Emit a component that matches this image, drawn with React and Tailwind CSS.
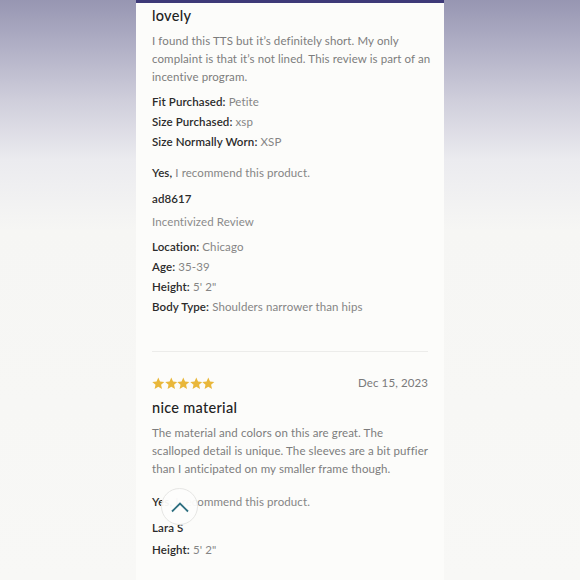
import React from 'react';

const Star = () => (
  <svg width="12.6" height="13" viewBox="0 0 24 23" className="shrink-0">
    <path d="M12 0.3l3.3 7.4 8.2.8-6.2 5.5 1.8 8.1L12 17.9l-7.1 4.2 1.8-8.1L.5 8.5l8.2-.8z" fill="#e9b73a" />
  </svg>
);

const Field = ({ label, value }) => (
  <div className="leading-[20px]">
    <span className="text-[#2b2b2b] font-semibold">{label}:</span>{' '}
    <span className="text-[#858585]">{value}</span>
  </div>
);

const App = () => {
  return (
    <div
      className="w-[580px] h-[580px] overflow-hidden flex justify-center bg-[linear-gradient(180deg,#9796b2_0px,#adacc3_40px,#cfcedb_100px,#ebebef_160px,#f6f6f4_230px,#f8f8f6_580px)]"
      style={{ fontFamily: 'Lato, "Noto Sans", sans-serif' }}
    >
      <div className="relative w-[308px] h-full bg-[#fcfcfa] flex flex-col text-[11.5px] tracking-[0.1px]">
        <div className="h-[3px] bg-[#3e3a78]" />
        <div className="pl-4 pr-3 flex flex-col">
          <h2 className="mt-[3px] text-[14.5px] leading-[20px] text-[#222] font-medium tracking-[0.3px]">lovely</h2>
          <p className="mt-[6px] leading-[18px] text-[#7d7d7d]">
            I found this TTS but it’s definitely short. My only complaint is that it’s not lined. This review is part of an incentive program.
          </p>
          <div className="mt-[6px]">
            <Field label="Fit Purchased" value="Petite" />
            <Field label="Size Purchased" value="xsp" />
            <Field label="Size Normally Worn" value="XSP" />
          </div>
          <div className="mt-[11px] leading-[20px]">
            <span className="text-[#2b2b2b] font-semibold">Yes,</span>{' '}
            <span className="text-[#858585]">I recommend this product.</span>
          </div>
          <div className="mt-[6px] leading-[20px] text-[#2b2b2b] font-semibold">ad8617</div>
          <div className="mt-[3px] leading-[20px] text-[#8a8a8a]">Incentivized Review</div>
          <div className="mt-[5px]">
            <Field label="Location" value="Chicago" />
            <Field label="Age" value="35-39" />
            <Field label="Height" value={'5\' 2"'} />
            <Field label="Body Type" value="Shoulders narrower than hips" />
          </div>
          <div className="mt-[34px] mr-1 h-px bg-[#ececea]" />

          <div className="mt-[21px] mr-1 h-[20px] flex items-center justify-between">
            <div className="flex">
              <Star /><Star /><Star /><Star /><Star />
            </div>
            <span className="text-[#7a7a7a]">Dec 15, 2023</span>
          </div>
          <h2 className="mt-[5px] text-[14.5px] leading-[20px] text-[#222] font-medium tracking-[0.3px]">nice material</h2>
          <p className="mt-[6px] leading-[18px] text-[#7d7d7d]">
            The material and colors on this are great. The scalloped detail is unique. The sleeves are a bit puffier than I anticipated on my smaller frame though.
          </p>
          <div className="mt-[14px] leading-[20px]">
            <span className="text-[#2b2b2b] font-semibold">Yes,</span>{' '}
            <span className="text-[#858585]">I recommend this product.</span>
          </div>
          <div className="mt-[6px] leading-[20px] text-[#2b2b2b] font-semibold">Lara S</div>
          <div className="mt-[2px]">
            <Field label="Height" value={'5\' 2"'} />
          </div>
        </div>

        <button className="absolute left-[25px] top-[488px] w-[37px] h-[37px] rounded-full border border-[#e6e6e4] bg-[#fdfdfc]/95 flex items-center justify-center">
          <svg width="20" height="12" viewBox="0 0 20 12" fill="none">
            <path d="M2 10.5L10 2.5L18 10.5" stroke="#2e6f80" strokeWidth="1.8" />
          </svg>
        </button>
      </div>
    </div>
  );
};

export default App;
